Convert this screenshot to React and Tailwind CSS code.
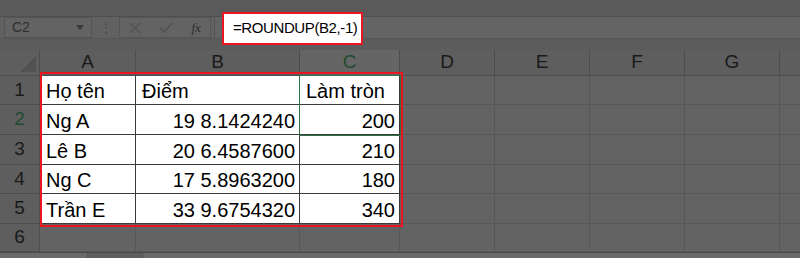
import React from 'react';

const cols = [
  { key: 'A', w: 'w-[96px]' },
  { key: 'B', w: 'w-[164px]' },
  { key: 'C', w: 'w-[100px]' },
  { key: 'D', w: 'w-[95px]' },
  { key: 'E', w: 'w-[95px]' },
  { key: 'F', w: 'w-[95px]' },
  { key: 'G', w: 'w-[95px]' },
];

const rows = [
  { n: '1', h: 'h-[29px]', cells: ['Họ tên', 'Điểm', 'Làm tròn'] },
  { n: '2', h: 'h-[30px]', cells: ['Ng A', '19 8.1424240', '200'] },
  { n: '3', h: 'h-[30px]', cells: ['Lê B', '20 6.4587600', '210'] },
  { n: '4', h: 'h-[29px]', cells: ['Ng C', '17 5.8963200', '180'] },
  { n: '5', h: 'h-[30px]', cells: ['Trần E', '33 9.6754320', '340'] },
  { n: '6', h: 'h-[28px]', cells: null },
];

const Cell = ({ col, row, text, ci }) => {
  const white = row.cells && ci < 3;
  const rightAlign = white && ci > 0 && row.n !== '1';
  return (
    <div
      className={`${col.w} ${row.h} shrink-0 flex items-end border-r border-b ${
        white ? 'bg-white border-[#3a3a3a] text-black' : 'bg-[#636363] border-[#575757]'
      } ${rightAlign ? 'justify-end pr-[4px]' : 'pl-[6px]'}`}
    >
      {white && <span className="text-[20px] leading-[23px] pb-[1px] whitespace-nowrap">{text}</span>}
    </div>
  );
};

export default function App() {
  return (
    <div className="relative w-[800px] h-[258px] overflow-hidden bg-[#616161] text-[#1a1a1a]" style={{ fontFamily: '"Liberation Sans", Arial, sans-serif' }}>
      {/* ribbon edge */}
      <div className="h-[17px] bg-[#5a5a5a] border-b border-[#4f4f4f]" />

      {/* formula bar */}
      <div className="h-[22px] flex items-stretch bg-[#616161] border-b border-[#565656]">
        <div className="ml-[4px] w-[88px] flex items-center justify-between px-[7px] bg-[#636363] border border-[#545454]">
          <span className="text-[14px] text-[#2e2e2e]">C2</span>
          <svg width="8" height="5" viewBox="0 0 8 5"><path d="M0 0h8L4 5z" fill="#3a3a3a" /></svg>
        </div>
        <div className="w-[27px] flex items-center justify-center text-[#4a4a4a] text-[12px]">⋮</div>
        <div className="w-[92px] flex items-center justify-around bg-[#636363] border border-[#555555]">
          <svg width="12" height="12" viewBox="0 0 12 12"><path d="M1 1l10 10M11 1L1 11" stroke="#525252" strokeWidth="1.2" /></svg>
          <svg width="14" height="12" viewBox="0 0 14 12"><path d="M1 6l4 4 8-9" stroke="#525252" strokeWidth="1.5" fill="none" /></svg>
          <span className="italic text-[13px] text-[#2e2e2e]" style={{ fontFamily: '"Liberation Serif", serif' }}>fx</span>
        </div>
        <div className="flex-1 ml-[3px] bg-[#646464] border-l border-[#555555]" />
      </div>

      <div className="h-[11px] bg-[#5c5c5c]" />

      {/* column headers */}
      <div className="flex h-[26px] bg-[#5e5e5e]">
        <div className="w-[40px] shrink-0 relative border-r border-b border-[#4e4e4e]">
          <svg className="absolute right-[3px] bottom-[3px]" width="16" height="16" viewBox="0 0 16 16"><path d="M16 0V16H0z" fill="#525252" /></svg>
        </div>
        {cols.map((c) => (
          <div
            key={c.key}
            className={`${c.w} shrink-0 flex items-center justify-center text-[19px] border-r border-b ${
              c.key === 'C' ? 'bg-[#656565] text-[#1f4a2e] border-b-[#2e6a42] border-r-[#4e4e4e]' : 'border-[#4e4e4e]'
            }`}
          >
            {c.key}
          </div>
        ))}
        <div className="flex-1 border-b border-[#4e4e4e]" />
      </div>

      {/* rows */}
      {rows.map((r) => (
        <div key={r.n} className="flex">
          <div
            className={`w-[40px] ${r.h} shrink-0 flex items-center justify-center text-[19px] bg-[#5e5e5e] border-r border-b border-[#4e4e4e] ${
              r.n === '2' ? 'text-[#1f4a2e]' : ''
            }`}
          >
            {r.n}
          </div>
          {cols.map((c, ci) => (
            <Cell key={c.key} col={c} row={r} ci={ci} text={r.cells ? r.cells[ci] : ''} />
          ))}
          <div className={`flex-1 ${r.h} bg-[#636363] border-b border-[#575757]`} />
        </div>
      ))}

      {/* sheet tab strip */}
      <div className="flex h-[6px] border-t border-[#4a4a4a] bg-[#6a6a6a]">
        <div className="w-[88px] border-r border-[#555555]" />
        <div className="w-[55px] bg-[#5e5e5e] border-r border-[#555555]" />
      </div>

      {/* highlight annotations */}
      <div className="absolute left-[222px] top-[12px] w-[141px] h-[33px] bg-white border-2 border-[#e8161e] flex items-center pl-[9px]">
        <span className="text-[15px] tracking-[-0.4px] text-black whitespace-nowrap">=ROUNDUP(B2,-1)</span>
      </div>
      <div className="absolute left-[299px] top-[75px] w-[102px] h-[61px] border border-[#2e7048] pointer-events-none" />
      <div className="absolute left-[40px] top-[72px] w-[363px] h-[155px] border-2 border-[#e8161e] pointer-events-none" />
    </div>
  );
}
